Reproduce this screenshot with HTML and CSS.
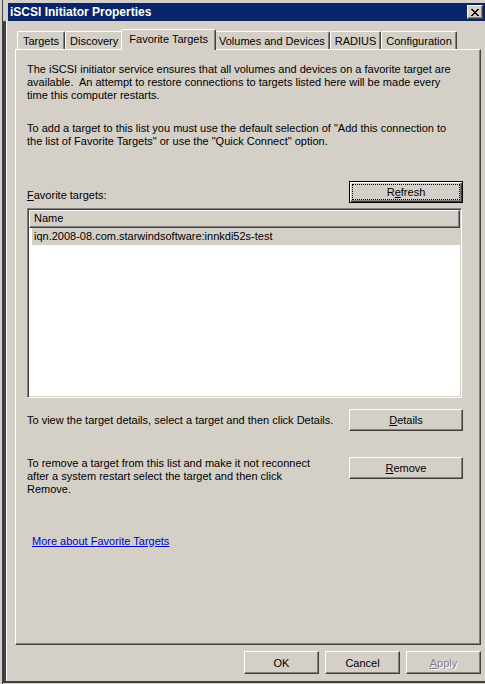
FILE: index.html
```html
<!DOCTYPE html>
<html lang="en">
<head>
<meta charset="UTF-8" />
<title>iSCSI Initiator Properties</title>
<link rel="stylesheet" href="styles.css">
</head>
<body>
  <div class="window">
    <div class="titlebar">
      <span class="title">iSCSI Initiator Properties</span>
      <span class="close-btn">
        <svg width="8" height="7" viewBox="0 0 8 7"><path d="M0 0h2v1h-2zM6 0h2v1h-2zM1 1h2v1h-2zM5 1h2v1h-2zM2 2h4v1h-4zM3 3h2v1h-2zM2 4h4v1h-4zM1 5h2v1h-2zM5 5h2v1h-2zM0 6h2v1h-2zM6 6h2v1h-2z" fill="#000"/></svg>
      </span>
    </div>
    <div class="client">
      <div class="tabs">
        <div class="tab">Targets</div>
        <div class="tab">Discovery</div>
        <div class="tab selected">Favorite Targets</div>
        <div class="tab">Volumes and Devices</div>
        <div class="tab">RADIUS</div>
        <div class="tab">Configuration</div>
      </div>
      <div class="panel">
        <p class="intro">The iSCSI initiator service ensures that all volumes and devices on a favorite target are<br>available.&nbsp; An attempt to restore connections to targets listed here will be made every<br>time this computer restarts.</p>
        <p class="hint">To add a target to this list you must use the default selection of "Add this connection to<br>the list of Favorite Targets" or use the "Quick Connect" option.</p>

        <div class="row row-list">
          <span class="label"><u>F</u>avorite targets:</span>
          <button class="btn default"><span class="focus">R<u>e</u>fresh</span></button>
        </div>

        <div class="listbox">
          <div class="list-header">Name</div>
          <div class="list-item">iqn.2008-08.com.starwindsoftware:innkdi52s-test</div>
        </div>

        <div class="row row-details">
          <span>To view the target details, select a target and then click Details.</span>
          <button class="btn"><u>D</u>etails</button>
        </div>

        <div class="row row-remove">
          <span>To remove a target from this list and make it not reconnect<br>after a system restart select the target and then click<br>Remove.</span>
          <button class="btn"><u>R</u>emove</button>
        </div>

        <a class="more" href="#">More about Favorite Targets</a>
      </div>

      <div class="actions">
        <button class="btn small">OK</button>
        <button class="btn small">Cancel</button>
        <button class="btn small disabled"><u>A</u>pply</button>
      </div>
    </div>
  </div>
</body>
</html>
```

FILE: styles.css
```css
body, html {
  margin: 0; padding: 0;
  background: #d4d0c8;
  font-family: "Liberation Sans", Arial, sans-serif;
  font-size: 11px;
  color: #000;
}
.window {
  width: 483px;
  height: 684px;
  margin-left: 2px;
  border-left: 1px solid #404040;
  box-sizing: border-box;
  display: flex;
  flex-direction: column;
  padding-top: 3px;
}
.titlebar {
  height: 18px;
  margin-left: 5px;
  background: #0a246a;
  color: #fff;
  display: flex;
  align-items: center;
  justify-content: space-between;
  padding: 0 2px 0 2px;
}
.title {
  font-weight: bold;
  font-size: 12px;
}
.close-btn {
  width: 14px;
  height: 12px;
  background: #d4d0c8;
  border: 1px solid;
  border-color: #fff #404040 #404040 #fff;
  box-shadow: inset -1px -1px #808080;
  display: flex;
  align-items: center;
  justify-content: center;
}
.client {
  flex: 1;
  border-left: 3px solid #404040;
  border-bottom: 2px solid #404040;
  margin-bottom: 1px;
  box-shadow: inset 1px 0 #fff;
  padding: 8px 4px 0 9px;
  display: flex;
  flex-direction: column;
}
.tabs {
  display: flex;
  align-items: flex-end;
  padding-left: 2px;
  height: 20px;
}
.tab {
  height: 18px;
  min-width: 48px;
  box-sizing: border-box;
  padding: 2px 4px 0 4px;
  line-height: 14px;
  text-align: center;
  border: 1px solid;
  border-bottom: none;
  border-color: #fff #404040 transparent #fff;
  border-radius: 2px 2px 0 0;
  box-shadow: inset -1px 0 #808080;
  white-space: nowrap;
}
.tab.selected {
  height: 21px;
  margin: 0 -2px -1px -2px;
  padding: 2px 7px 0 7px;
  position: relative;
  z-index: 1;
  background: #d4d0c8;
}
.panel {
  height: 596px;
  box-sizing: border-box;
  border: 1px solid;
  border-color: #fff #404040 #404040 #fff;
  box-shadow: inset -1px -1px #808080;
  padding: 13px 17px 0 11px;
  display: flex;
  flex-direction: column;
}
p {
  margin: 0;
  line-height: 13px;
  white-space: nowrap;
}
.hint {
  margin-top: 20px;
}
.row {
  display: flex;
  justify-content: space-between;
  line-height: 13px;
}
.row-list {
  margin-top: 33px;
  align-items: flex-end;
}
.row-list .label {
  padding-bottom: 1px;
}
.row-details {
  margin-top: 11px;
  align-items: center;
}
.row-remove {
  margin-top: 26px;
  align-items: flex-start;
}
.btn {
  width: 114px;
  height: 22px;
  box-sizing: border-box;
  background: #d4d0c8;
  border: 1px solid;
  border-color: #fff #404040 #404040 #fff;
  box-shadow: inset -1px -1px #808080;
  font-family: inherit;
  font-size: 11px;
  color: #000;
  padding: 0;
  flex-shrink: 0;
}
.btn.default {
  border-color: #000;
  box-shadow: inset 1px 1px #fff, inset -1px -1px #404040, inset -2px -2px #808080;
  display: flex;
  align-items: stretch;
  padding: 3px;
}
.focus {
  flex: 1;
  outline: 1px dotted #000;
  outline-offset: 0;
  display: flex;
  align-items: center;
  justify-content: center;
}
.listbox {
  margin-top: 5px;
  margin-right: 1px;
  height: 190px;
  box-sizing: border-box;
  background: #fff;
  border: 1px solid;
  border-color: #808080 #fff #fff #808080;
  box-shadow: inset 1px 1px #404040, inset -1px -1px #d4d0c8;
  padding: 1px;
}
.list-header {
  height: 18px;
  box-sizing: border-box;
  background: #d4d0c8;
  border: 1px solid;
  border-color: #fff #404040 #404040 #fff;
  box-shadow: inset -1px -1px #808080;
  padding-left: 4px;
  line-height: 15px;
}
.list-item {
  margin-left: 3px;
  height: 17px;
  line-height: 17px;
  background: #d4d0c8;
  padding-left: 2px;
}
.more {
  margin-top: 39px;
  margin-left: 5px;
  color: #0000cc;
  line-height: 13px;
  align-self: flex-start;
}
.actions {
  display: flex;
  justify-content: flex-end;
  gap: 6px;
  margin-top: 6px;
}
.btn.small {
  width: 75px;
  height: 23px;
}
.btn.disabled {
  color: #808080;
  text-shadow: 1px 1px #fff;
}
```
